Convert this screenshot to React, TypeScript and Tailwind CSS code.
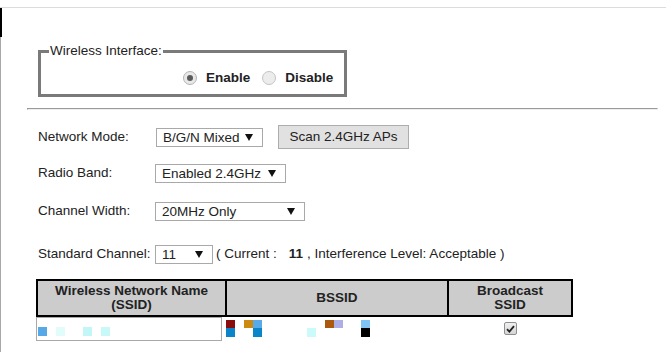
import React from "react";

const Arrow = () => (
  <svg width="8" height="7" viewBox="0 0 8 7" className="shrink-0">
    <polygon points="0,0 8,0 4,7" fill="#111" />
  </svg>
);

const FakeSelect = ({ text, w }: { text: string; w: string }) => (
  <div className={`flex h-[19px] items-center justify-between border border-[#a9a9a9] bg-white pl-[6px] pr-[9px] ${w}`}>
    <span className="whitespace-nowrap leading-[17px]">{text}</span>
    <Arrow />
  </div>
);

const bssid: (string | null)[][] = [
  ["#8a0c0c", null, "#cc8a12", "#59aae9", null, null, null, null, null, null, null, "#a9580e", "#aeaee6", null, null, "#82c3f5"],
  ["#0b85c9", null, null, "#0b85c9", null, null, null, null, null, "#cbfafa", null, null, null, null, null, "#000000"],
];
const ssid: (string | null)[] = ["#57a8e6", null, "#e2fbfb", null, null, "#c3f7f7", null, "#c8f8f8"];

export default function App() {
  return (
    <div className="flex h-[352px] w-[666px] flex-col overflow-hidden bg-white font-['Liberation_Sans',Arial,sans-serif] text-[13.5px] text-[#222]">
      <div className="h-[8px] shrink-0 border-b border-[#dcdcdc]" />
      <div className="flex flex-1">
        <div className="flex w-[2px] shrink-0 flex-col">
          <div className="h-[29px] w-[2px] bg-black" />
          <div className="w-[1px] flex-1 bg-[#a8a8a8]" />
        </div>
        <div className="flex flex-1 flex-col">
          {/* Fieldset */}
          <div className="relative ml-[36px] mt-[42px] h-[47px] w-[309px] border-[3px] border-[#7a7a7a]">
            <span className="absolute left-[8px] top-[-10px] bg-white px-[1px] leading-[15px]">Wireless Interface:</span>
            <div className="flex items-center pl-[142px] pt-[17px]">
              <div className="flex h-[14px] w-[14px] items-center justify-center rounded-full border border-[#b4b4b4] bg-[#e8e8e8]">
                <div className="h-[6px] w-[6px] rounded-full bg-[#5a5a5a]" />
              </div>
              <span className="ml-[9px] font-bold leading-[16px]">Enable</span>
              <div className="ml-[12px] h-[14px] w-[14px] rounded-full border border-[#c4c4c4] bg-[#ececec]" />
              <span className="ml-[9px] font-bold leading-[16px]">Disable</span>
            </div>
          </div>
          {/* hr */}
          <div className="ml-[25px] mt-[11px] h-[2px] w-[631px] border-b border-l border-r border-t border-b-[#eeeeee] border-l-[#9a9a9a] border-r-[#eeeeee] border-t-[#9a9a9a]" />
          {/* Network Mode */}
          <div className="ml-[36px] mt-[15px] flex h-[24px] items-center">
            <span className="w-[117px] shrink-0">Network Mode:</span>
            <FakeSelect text="B/G/N Mixed" w="w-[107px] ml-[1px] pl-[5px]" />
            <button className="ml-[15px] flex h-[24px] w-[131px] items-center justify-center border border-[#adadad] bg-[#e1e1e1] text-[#222]">
              Scan 2.4GHz APs
            </button>
          </div>
          {/* Radio Band */}
          <div className="ml-[36px] mt-[15px] flex h-[19px] items-center">
            <span className="w-[117px] shrink-0">Radio Band:</span>
            <FakeSelect text="Enabled 2.4GHz" w="w-[131px]" />
          </div>
          {/* Channel Width */}
          <div className="ml-[36px] mt-[19px] flex h-[19px] items-center">
            <span className="w-[117px] shrink-0">Channel Width:</span>
            <FakeSelect text="20MHz Only" w="w-[150px]" />
          </div>
          {/* Standard Channel */}
          <div className="ml-[36px] mt-[24px] flex h-[19px] items-center whitespace-nowrap">
            <span className="w-[117px] shrink-0">Standard Channel:</span>
            <FakeSelect text="11" w="w-[58px]" />
            <span className="ml-[3px]">( Current :</span>
            <span className="ml-[12px] font-bold">11</span>
            <span className="ml-[4px]">, Interference Level: Acceptable )</span>
          </div>
          {/* Table */}
          <div className="ml-[34px] mt-[15px] flex w-[537px] flex-col">
            <div className="flex h-[38px] border-2 border-black bg-[#cccccc] text-center font-bold leading-[14px]">
              <div className="flex w-[187px] flex-col items-center justify-center">
                <span>Wireless Network Name</span>
                <span>(SSID)</span>
              </div>
              <div className="flex w-[222px] items-center justify-center border-l-2 border-black">BSSID</div>
              <div className="flex flex-1 flex-col items-center justify-center border-l-2 border-black">
                <span>Broadcast</span>
                <span>SSID</span>
              </div>
            </div>
            <div className="flex h-[26px]">
              <div className="w-[189px] shrink-0">
                <div className="h-[24px] w-[186px] border border-[#a9a9a9] bg-white pl-[1px] pt-[9px]">
                  <div className="grid grid-cols-[repeat(8,9px)] grid-rows-[9px]">
                    {ssid.map((c, i) => (
                      <div key={i} style={{ backgroundColor: c ?? "transparent" }} />
                    ))}
                  </div>
                </div>
              </div>
              <div className="w-[222px] shrink-0 pl-[1px] pt-[3px]">
                <div className="grid grid-cols-[repeat(16,9px)] grid-rows-[8px_9px]">
                  {bssid.flatMap((row, r) =>
                    row.map((c, i) => <div key={`${r}-${i}`} style={{ backgroundColor: c ?? "transparent" }} />)
                  )}
                </div>
              </div>
              <div className="flex flex-1 justify-center pt-[5px]">
                <div className="flex h-[13px] w-[13px] items-center justify-center rounded-[2px] border border-[#8f8f8f] bg-gradient-to-b from-[#f0f0f0] to-[#d6d6d6]">
                  <svg width="9" height="8" viewBox="0 0 9 8">
                    <path d="M1 4.2 L3.4 6.6 L8 1.2" stroke="#222" strokeWidth="1.8" fill="none" />
                  </svg>
                </div>
              </div>
            </div>
          </div>
        </div>
      </div>
    </div>
  );
}
